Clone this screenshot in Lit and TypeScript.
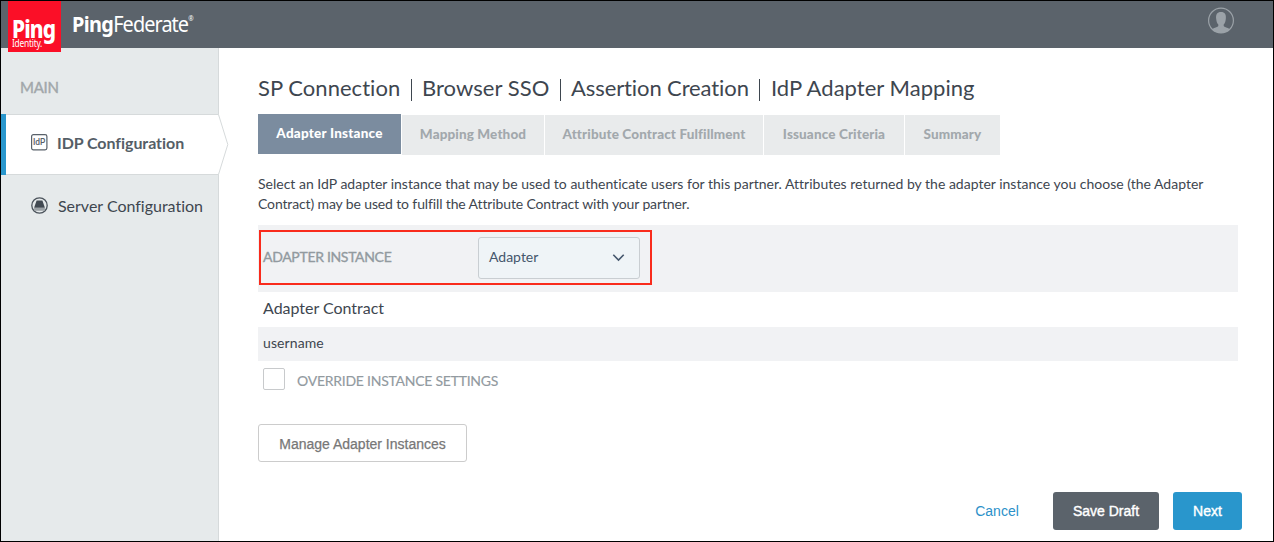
import { LitElement, html, css } from "lit";
import { customElement } from "lit/decorators.js";

@customElement("app-root")
export class AppRoot extends LitElement {
  static styles = css`
    :host { display: block; width: 1274px; height: 542px; box-sizing: border-box; border: 1px solid #000; background: #fff; font-family: Lato, "Open Sans", sans-serif; font-size: 14px; color: #3e464f; overflow: hidden; white-space: nowrap; font-variant-ligatures: none; }
    * { box-sizing: border-box; }
    svg { display: block; flex: none; }
    .header { height: 47px; background: #5b636b; display: flex; align-items: flex-start; padding: 0 38px 0 7px; }
    .logo { width: 53px; height: 51px; background: #fb0f27; color: #fff; position: relative; z-index: 2; padding: 18px 0 0 4px; font-family: "Noto Sans", sans-serif; }
    .ping { font-weight: 800; font-size: 24px; line-height: 20px; height: 20px; letter-spacing: -1px; transform: scaleX(.87); transform-origin: 0 0; }
    .identity { font-size: 10px; line-height: 9px; height: 9px; letter-spacing: -.3px; transform: scaleX(.84); transform-origin: 0 0; }
    .product { margin: 8px 0 0 11px; color: #fff; font: 400 21.5px/30px "Noto Sans", sans-serif; letter-spacing: -1px; flex: 1; display: flex; transform: scaleX(.925); transform-origin: 0 0; }
    .product b { font-weight: 700; letter-spacing: -.7px; }
    .reg { font-size: 7px; line-height: 20px; }
    .avatar { margin-top: 6px; }
    .body { display: flex; height: 493px; }
    .side { width: 218px; background: #e6eaeb; border-right: 1px solid #d6dadb; flex: none; }
    .main-label { height: 66px; padding: 29px 0 0 19px; font-size: 15px; line-height: 20px; color: #a1a7aa; letter-spacing: -.25px; -webkit-text-stroke: .4px #a1a7aa; }
    .nav { display: flex; align-items: center; height: 61px; padding-left: 30px; }
    .nav.active { width: 228px; position: relative; padding-left: 25px; }
    .nav.active::before { content: ""; position: absolute; inset: 0 auto 0 0; width: 5px; background: #2996cc; z-index: 1; }
    .arrow { position: absolute; left: 0; top: 0; }
    .nav .icon { position: relative; }
    .nav .text { position: relative; margin-left: 10px; margin-bottom: 2px; font-size: 16px; line-height: 22px; letter-spacing: -.01px; }
    .active .icon { margin: 0 0 5px 5px; }
    .nav.active .text { font-weight: 700; color: #555e67; margin-bottom: 3px; margin-left: 9px; letter-spacing: -.06px; }
    .server { margin-top: 1px; }
    .server .icon { margin-bottom: 3px; }
    .content { flex: 1; padding: 27px 31px 0 39px; }
    .title { display: flex; align-items: center; height: 28px; font-size: 22px; line-height: 26px; padding-bottom: 2px; }
    .bar { width: 1px; height: 22px; background: #3e464f; margin: 4px 10px 0; }
    .t1 { width: 143px; letter-spacing: .04px; } .t2 { width: 128px; letter-spacing: .04px; } .t3 { width: 178px; letter-spacing: -.1px; } .t4 { padding-left: 1px; letter-spacing: .03px; }
    .t1, .t2, .t3 { flex: none; }
    .tabs { display: flex; gap: 1px; margin-top: 11px; height: 41px; align-items: flex-end; }
    .tab { height: 40px; line-height: 38px; text-align: center; font-size: 13.5px; font-weight: 900; letter-spacing: .12px; background: #e9ebec; color: #a2a8ac; }
    .tab.on { background: #7b8c9f; color: #fff; align-self: flex-start; letter-spacing: .22px; }
    .w0 { width: 143px; } .w1 { width: 142px; } .w2 { width: 218px; } .w3 { width: 140px; } .w4 { width: 95px; }
    .desc { margin: 19px 0 0; line-height: 20px; height: 51px; font-size: 14px; }
    .d1 { letter-spacing: .003px; } .d2 { letter-spacing: -.13px; }
    .row { width: 980px; background: #f1f2f4; }
    .select-row { height: 67px; padding: 5px 0 0 1px; }
    .highlight { width: 393px; height: 55px; border: 2px solid #f92b1c; display: flex; align-items: center; padding-left: 2px; }
    .label { width: 215px; flex: none; color: #929a9f; font-size: 14px; letter-spacing: -.32px; -webkit-text-stroke: .35px #929a9f; padding-bottom: 2px; }
    .select { width: 162px; height: 42px; border: 1px solid #c9ced2; border-radius: 3px; background: #eff4f7; color: #44566c; display: flex; align-items: center; justify-content: space-between; padding: 0 14px 1px 10px; }
    .select span { margin-bottom: 1px; }
    .contract { height: 35px; line-height: 32px; padding-left: 5px; font-size: 16px; letter-spacing: -.02px; }
    .user { height: 34px; line-height: 32px; padding-left: 5px; letter-spacing: .1px; }
    .check { display: flex; padding: 7px 0 0 5px; gap: 12px; height: 63px; color: #929a9f; }
    .box { width: 22px; height: 22px; border: 1px solid #c8cacc; border-radius: 2px; }
    .check .text { line-height: 26px; letter-spacing: -.25px; -webkit-text-stroke: .15px #929a9f; }
    .btn { font-family: "Liberation Sans", Arial, sans-serif; font-size: 14px; border-radius: 3px; height: 38px; display: flex; align-items: center; justify-content: center; }
    .manage { width: 209px; border: 1px solid #ccc; color: #777; -webkit-text-stroke: .25px #777; padding-top: 2px; }
    .actions { display: flex; justify-content: flex-end; margin-top: 30px; }
    .cancel { width: 44px; color: #2c91c9; margin-right: 34px; }
    .save { width: 106px; background: #5b636b; color: #fff; margin-right: 14px; -webkit-text-stroke: .4px #fff; }
    .next { width: 69px; background: #2996cc; color: #fff; -webkit-text-stroke: .4px #fff; }
  `;

  render() {
    return html`
      <div class="header">
        <div class="logo"><div class="ping">Ping</div><div class="identity">Identity.</div></div>
        <div class="product"><b>Ping</b><span>Federate</span><span class="reg">®</span></div>
        <svg class="avatar" width="27" height="27" viewBox="0 0 27 27">
          <circle cx="13" cy="13.5" r="12.4" fill="none" stroke="#9ba2a8" stroke-width="1.2"/>
          <path d="M4 22.500c1-1.800 5.300-2 6.300-3.500v-1.500c-1.300-1.200-1.800-3-2.100-5.500-.6-4.500 1-7 4.800-7s5.400 2.500 4.800 7c-.3 2.500-.8 4.300-2.100 5.500v1.500c1 1.500 5.300 1.700 6.300 3.500-2.300 2.300-5.500 3.400-9 3.400s-6.700-1.100-9-3.400z" fill="#9ba2a8"/>
        </svg>
      </div>
      <div class="body">
        <div class="side">
          <div class="main-label">MAIN</div>
          <div class="nav active">
            <svg class="arrow" width="228" height="61" viewBox="0 0 228 61"><path d="M0 .5H217.500L226.800 30.500L217.500 60.500H0" fill="#fff" stroke="#d6dadb"/></svg>
            <svg class="icon" width="17" height="17" viewBox="0 0 17 17"><rect x=".6" y=".6" width="15.300" height="15.300" rx="1.800" fill="#fff" stroke="#59616a" stroke-width="1.200"/><text x="8.200" y="11.200" text-anchor="middle" font-family="Roboto" font-weight="500" font-size="8.200" textLength="12.500" lengthAdjust="spacingAndGlyphs" fill="#59616a">IdP</text></svg>
            <span class="text">IDP Configuration</span>
          </div>
          <div class="nav server">
            <svg class="icon" width="17" height="17" viewBox="0 0 17 17"><circle cx="8.500" cy="8.500" r="7.700" fill="#e6eaeb" stroke="#4b535b" stroke-width="1.300"/><path d="M5.600 3.600h5.800l2.500 7.100H3.100z" fill="#424a52"/><path d="M3.100 10.900h10.800v1.900c0 .5-.3.900-.8.900H3.900c-.5 0-.8-.4-.8-.9z" fill="#9ba1a5"/></svg>
            <span class="text">Server Configuration</span>
          </div>
        </div>
        <div class="content">
          <div class="title"><span class="t1">SP Connection</span><i class="bar"></i><span class="t2">Browser SSO</span><i class="bar"></i><span class="t3">Assertion Creation</span><i class="bar"></i><span class="t4">IdP Adapter Mapping</span></div>
          <div class="tabs"><div class="tab on w0">Adapter Instance</div><div class="tab w1">Mapping Method</div><div class="tab w2">Attribute Contract Fulfillment</div><div class="tab w3">Issuance Criteria</div><div class="tab w4">Summary</div></div>
          <p class="desc"><span class="d1">Select an IdP adapter instance that may be used to authenticate users for this partner. Attributes returned by the adapter instance you choose (the Adapter</span><br><span class="d2">Contract) may be used to fulfill the Attribute Contract with your partner.</span></p>
          <div class="row select-row"><div class="highlight"><span class="label">ADAPTER INSTANCE</span><div class="select"><span>Adapter</span><svg width="13" height="9" viewBox="0 0 13 9"><path d="M1.300 1.800l5.200 5.200 5.200-5.200" fill="none" stroke="#44566c" stroke-width="1.600"/></svg></div></div></div>
          <div class="contract">Adapter Contract</div>
          <div class="row user">username</div>
          <div class="check"><span class="box"></span><span class="text">OVERRIDE INSTANCE SETTINGS</span></div>
          <div class="btn manage">Manage Adapter Instances</div>
          <div class="actions"><div class="btn cancel">Cancel</div><div class="btn save">Save Draft</div><div class="btn next">Next</div></div>
        </div>
      </div>`;
  }
}
